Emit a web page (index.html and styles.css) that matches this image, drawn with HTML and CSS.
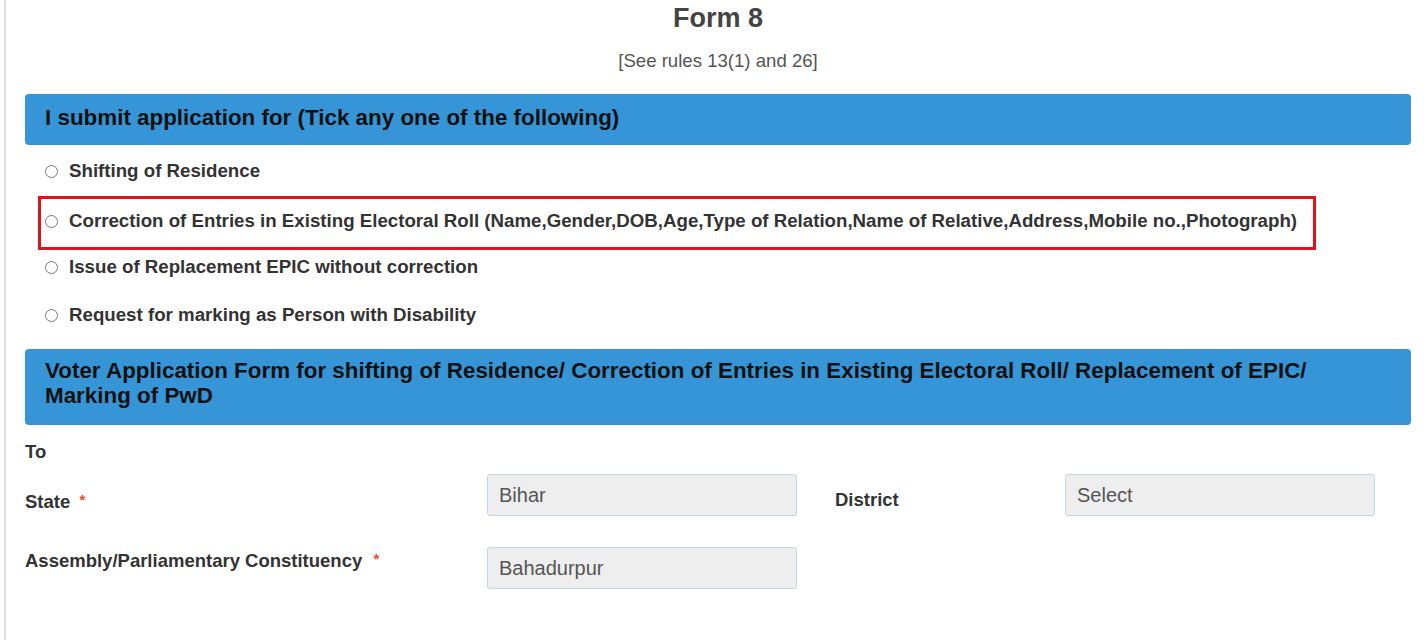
FILE: index.html
```html
<!DOCTYPE html>
<html>
<head>
<meta charset="utf-8">
<link rel="stylesheet" href="styles.css">
</head>
<body>
<div class="page">
  <h1 class="title">Form 8</h1>
  <p class="subtitle">[See rules 13(1) and 26]</p>

  <div class="bar bar-one">I submit application for (Tick any one of the following)</div>

  <div class="options">
    <label class="option"><input type="radio" name="app"> <span>Shifting of Residence</span></label>
    <div class="highlight">
      <label class="option"><input type="radio" name="app"> <span>Correction of Entries in Existing Electoral Roll (Name,Gender,DOB,Age,Type of Relation,Name of Relative,Address,Mobile no.,Photograph)</span></label>
    </div>
    <label class="option"><input type="radio" name="app"> <span>Issue of Replacement EPIC without correction</span></label>
    <label class="option"><input type="radio" name="app"> <span>Request for marking as Person with Disability</span></label>
  </div>

  <div class="bar bar-two">Voter Application Form for shifting of Residence/ Correction of Entries in Existing Electoral Roll/ Replacement of EPIC/ Marking of PwD</div>

  <div class="to">To</div>

  <div class="fields">
    <div class="label row1">State <span class="req">*</span></div>
    <div class="field row1"><div class="input">Bihar</div></div>
    <div class="label row1 dist">District</div>
    <div class="field row1"><div class="input">Select</div></div>

    <div class="label row2">Assembly/Parliamentary Constituency <span class="req">*</span></div>
    <div class="field row2"><div class="input">Bahadurpur</div></div>
  </div>
</div>
</body>
</html>
```

FILE: styles.css
```css
html, body {
  margin: 0;
  padding: 0;
  background: #fff;
}
body {
  font-family: "Liberation Sans", Arial, sans-serif;
  color: #333;
}
.page {
  border-left: 2px solid #e0e0e0;
  margin-left: 4px;
  padding: 0 17px 0 19px;
  height: 640px;
  box-sizing: border-box;
}
.title {
  margin: 0;
  padding-top: 3px;
  text-align: center;
  font-size: 27px;
  line-height: 30px;
  font-weight: bold;
  color: #444;
}
.subtitle {
  margin: 18px 0 0;
  text-align: center;
  font-size: 18.6px;
  line-height: 20px;
  color: #555;
}
.bar {
  background: #3595d6;
  border-radius: 4px;
  color: #111;
  font-weight: bold;
  font-size: 22.4px;
  line-height: 25px;
  padding: 0 20px;
}
.bar-one {
  margin-top: 23px;
  height: 51px;
  display: flex;
  align-items: center;
  padding-bottom: 5px;
  box-sizing: border-box;
}
.bar-two {
  margin-top: 22px;
  padding-top: 9px;
  padding-bottom: 16px;
  height: 76px;
  box-sizing: border-box;
}
.options {
  display: flex;
  flex-direction: column;
  padding-top: 14px;
}
.option {
  display: flex;
  align-items: center;
  height: 24px;
  font-size: 18.7px;
  font-weight: bold;
  color: #333;
  padding-left: 20px;
}
.option input {
  margin: 0 11px 0 0;
  width: 13px;
  height: 13px;
}
.options > .option + .option {
  margin-top: 24px;
}
.highlight {
  border: 3px solid #e0121c;
  margin-left: 13px;
  margin-right: 95px;
  height: 54px;
  box-sizing: border-box;
  display: flex;
  align-items: center;
}
.options > .highlight { margin-top: 13px; }
.options > .highlight + .option { margin-top: 5px; }
.highlight .option {
  padding-left: 4px;
  margin-top: -4px;
}
.to {
  margin-top: 17px;
  font-size: 18.5px;
  font-weight: bold;
  line-height: 20px;
}
.fields {
  display: grid;
  grid-template-columns: 462px 348px 230px 310px;
  grid-template-rows: 42px 42px;
  row-gap: 31px;
  margin-top: 12px;
}
.label {
  font-size: 18.5px;
  font-weight: bold;
  color: #333;
  line-height: 22px;
  padding-top: 15px;
  white-space: nowrap;
}
.label.row2 {
  padding-top: 1px;
}
.req {
  color: #e74c3c;
  font-size: 15px;
  margin-left: 4px;
  vertical-align: 3px;
}
.row2 .req { margin-left: 6px; }
.field .input {
  width: 310px;
  height: 42px;
  box-sizing: border-box;
  background: #eee;
  border: 1px solid #c4d4e2;
  border-radius: 3px;
  padding: 9px 11px;
  font-size: 20px;
  line-height: 22px;
  color: #555;
}
.row2.field { grid-column: 2; }
```
